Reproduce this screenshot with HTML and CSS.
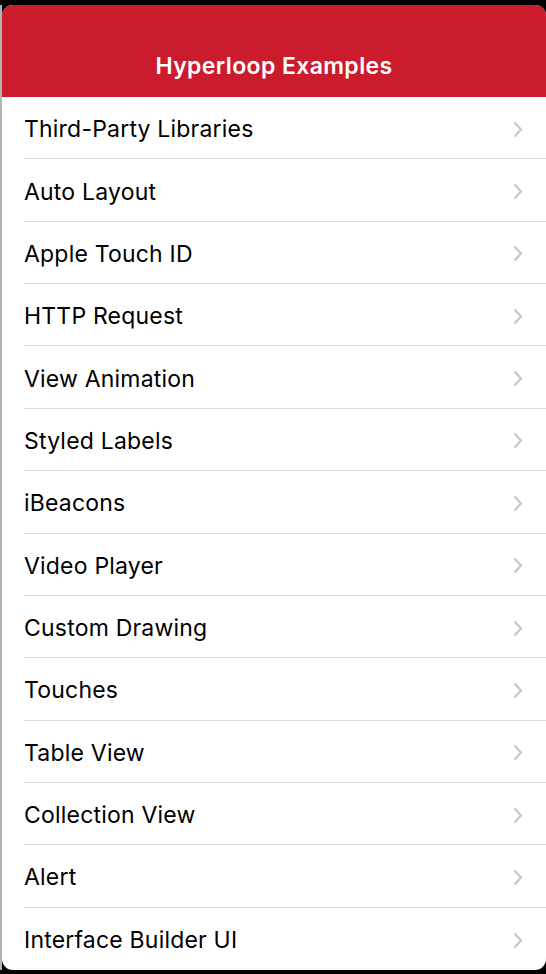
FILE: index.html
```html
<!DOCTYPE html>
<html>
<head>
<meta charset="utf-8">
<link rel="stylesheet" href="styles.css">
</head>
<body>
<div class="screen">
  <div class="backdrop"></div>
  <div class="sheet">
    <header class="navbar"><h1 class="title">Hyperloop Examples</h1></header>
    <ul class="list">
      <li class="row"><span class="label">Third-Party Libraries</span><svg class="chev" width="10" height="17" viewBox="0 0 10 17"><path d="M1.5 1.5 L8 8.5 L1.5 15.5" fill="none" stroke="#c7c7cc" stroke-width="2.2"/></svg></li>
      <li class="row"><span class="label">Auto Layout</span><svg class="chev" width="10" height="17" viewBox="0 0 10 17"><path d="M1.5 1.5 L8 8.5 L1.5 15.5" fill="none" stroke="#c7c7cc" stroke-width="2.2"/></svg></li>
      <li class="row"><span class="label">Apple Touch ID</span><svg class="chev" width="10" height="17" viewBox="0 0 10 17"><path d="M1.5 1.5 L8 8.5 L1.5 15.5" fill="none" stroke="#c7c7cc" stroke-width="2.2"/></svg></li>
      <li class="row"><span class="label">HTTP Request</span><svg class="chev" width="10" height="17" viewBox="0 0 10 17"><path d="M1.5 1.5 L8 8.5 L1.5 15.5" fill="none" stroke="#c7c7cc" stroke-width="2.2"/></svg></li>
      <li class="row"><span class="label">View Animation</span><svg class="chev" width="10" height="17" viewBox="0 0 10 17"><path d="M1.5 1.5 L8 8.5 L1.5 15.5" fill="none" stroke="#c7c7cc" stroke-width="2.2"/></svg></li>
      <li class="row"><span class="label">Styled Labels</span><svg class="chev" width="10" height="17" viewBox="0 0 10 17"><path d="M1.5 1.5 L8 8.5 L1.5 15.5" fill="none" stroke="#c7c7cc" stroke-width="2.2"/></svg></li>
      <li class="row"><span class="label">iBeacons</span><svg class="chev" width="10" height="17" viewBox="0 0 10 17"><path d="M1.5 1.5 L8 8.5 L1.5 15.5" fill="none" stroke="#c7c7cc" stroke-width="2.2"/></svg></li>
      <li class="row"><span class="label">Video Player</span><svg class="chev" width="10" height="17" viewBox="0 0 10 17"><path d="M1.5 1.5 L8 8.5 L1.5 15.5" fill="none" stroke="#c7c7cc" stroke-width="2.2"/></svg></li>
      <li class="row"><span class="label">Custom Drawing</span><svg class="chev" width="10" height="17" viewBox="0 0 10 17"><path d="M1.5 1.5 L8 8.5 L1.5 15.5" fill="none" stroke="#c7c7cc" stroke-width="2.2"/></svg></li>
      <li class="row"><span class="label">Touches</span><svg class="chev" width="10" height="17" viewBox="0 0 10 17"><path d="M1.5 1.5 L8 8.5 L1.5 15.5" fill="none" stroke="#c7c7cc" stroke-width="2.2"/></svg></li>
      <li class="row"><span class="label">Table View</span><svg class="chev" width="10" height="17" viewBox="0 0 10 17"><path d="M1.5 1.5 L8 8.5 L1.5 15.5" fill="none" stroke="#c7c7cc" stroke-width="2.2"/></svg></li>
      <li class="row"><span class="label">Collection View</span><svg class="chev" width="10" height="17" viewBox="0 0 10 17"><path d="M1.5 1.5 L8 8.5 L1.5 15.5" fill="none" stroke="#c7c7cc" stroke-width="2.2"/></svg></li>
      <li class="row"><span class="label">Alert</span><svg class="chev" width="10" height="17" viewBox="0 0 10 17"><path d="M1.5 1.5 L8 8.5 L1.5 15.5" fill="none" stroke="#c7c7cc" stroke-width="2.2"/></svg></li>
      <li class="row last"><span class="label">Interface Builder UI</span><svg class="chev" width="10" height="17" viewBox="0 0 10 17"><path d="M1.5 1.5 L8 8.5 L1.5 15.5" fill="none" stroke="#c7c7cc" stroke-width="2.2"/></svg></li>
    </ul>
  </div>
</div>
</body>
</html>
```

FILE: styles.css
```css
html, body {
  margin: 0;
  padding: 0;
  background: #000;
  overflow: hidden;
}
.screen {
  width: 546px;
  height: 974px;
  display: flex;
  padding-top: 5px;
  box-sizing: border-box;
}
.backdrop {
  width: 2px;
  height: 965px;
  background: #b4b4b4;
  flex: none;
}
.sheet {
  width: 544px;
  height: 965px;
  background: #fff;
  border-radius: 11px;
  overflow: hidden;
  display: flex;
  flex-direction: column;
  font-family: Inter, "Liberation Sans", sans-serif;
}
.navbar {
  height: 92px;
  background: #cb1c2e;
  display: flex;
  align-items: flex-end;
  justify-content: center;
  flex: none;
}
.title {
  margin: 0 0 16px 0;
  color: #fff;
  font-size: 23px;
  font-weight: 600;
  line-height: 30px;
  letter-spacing: 0.4px;
}
.list {
  list-style: none;
  margin: 0;
  padding: 0;
}
.row {
  height: 62.36px;
  box-sizing: border-box;
  margin-left: 22px;
  padding-right: 23px;
  padding-top: 3px;
  display: flex;
  align-items: center;
  justify-content: space-between;
  border-bottom: 1px solid #dcdcdf;
}
.row.last {
  border-bottom: none;
}
.label {
  font-size: 23px;
  color: #000;
  letter-spacing: 0.2px;
}
.chev {
  display: block;
}
```
